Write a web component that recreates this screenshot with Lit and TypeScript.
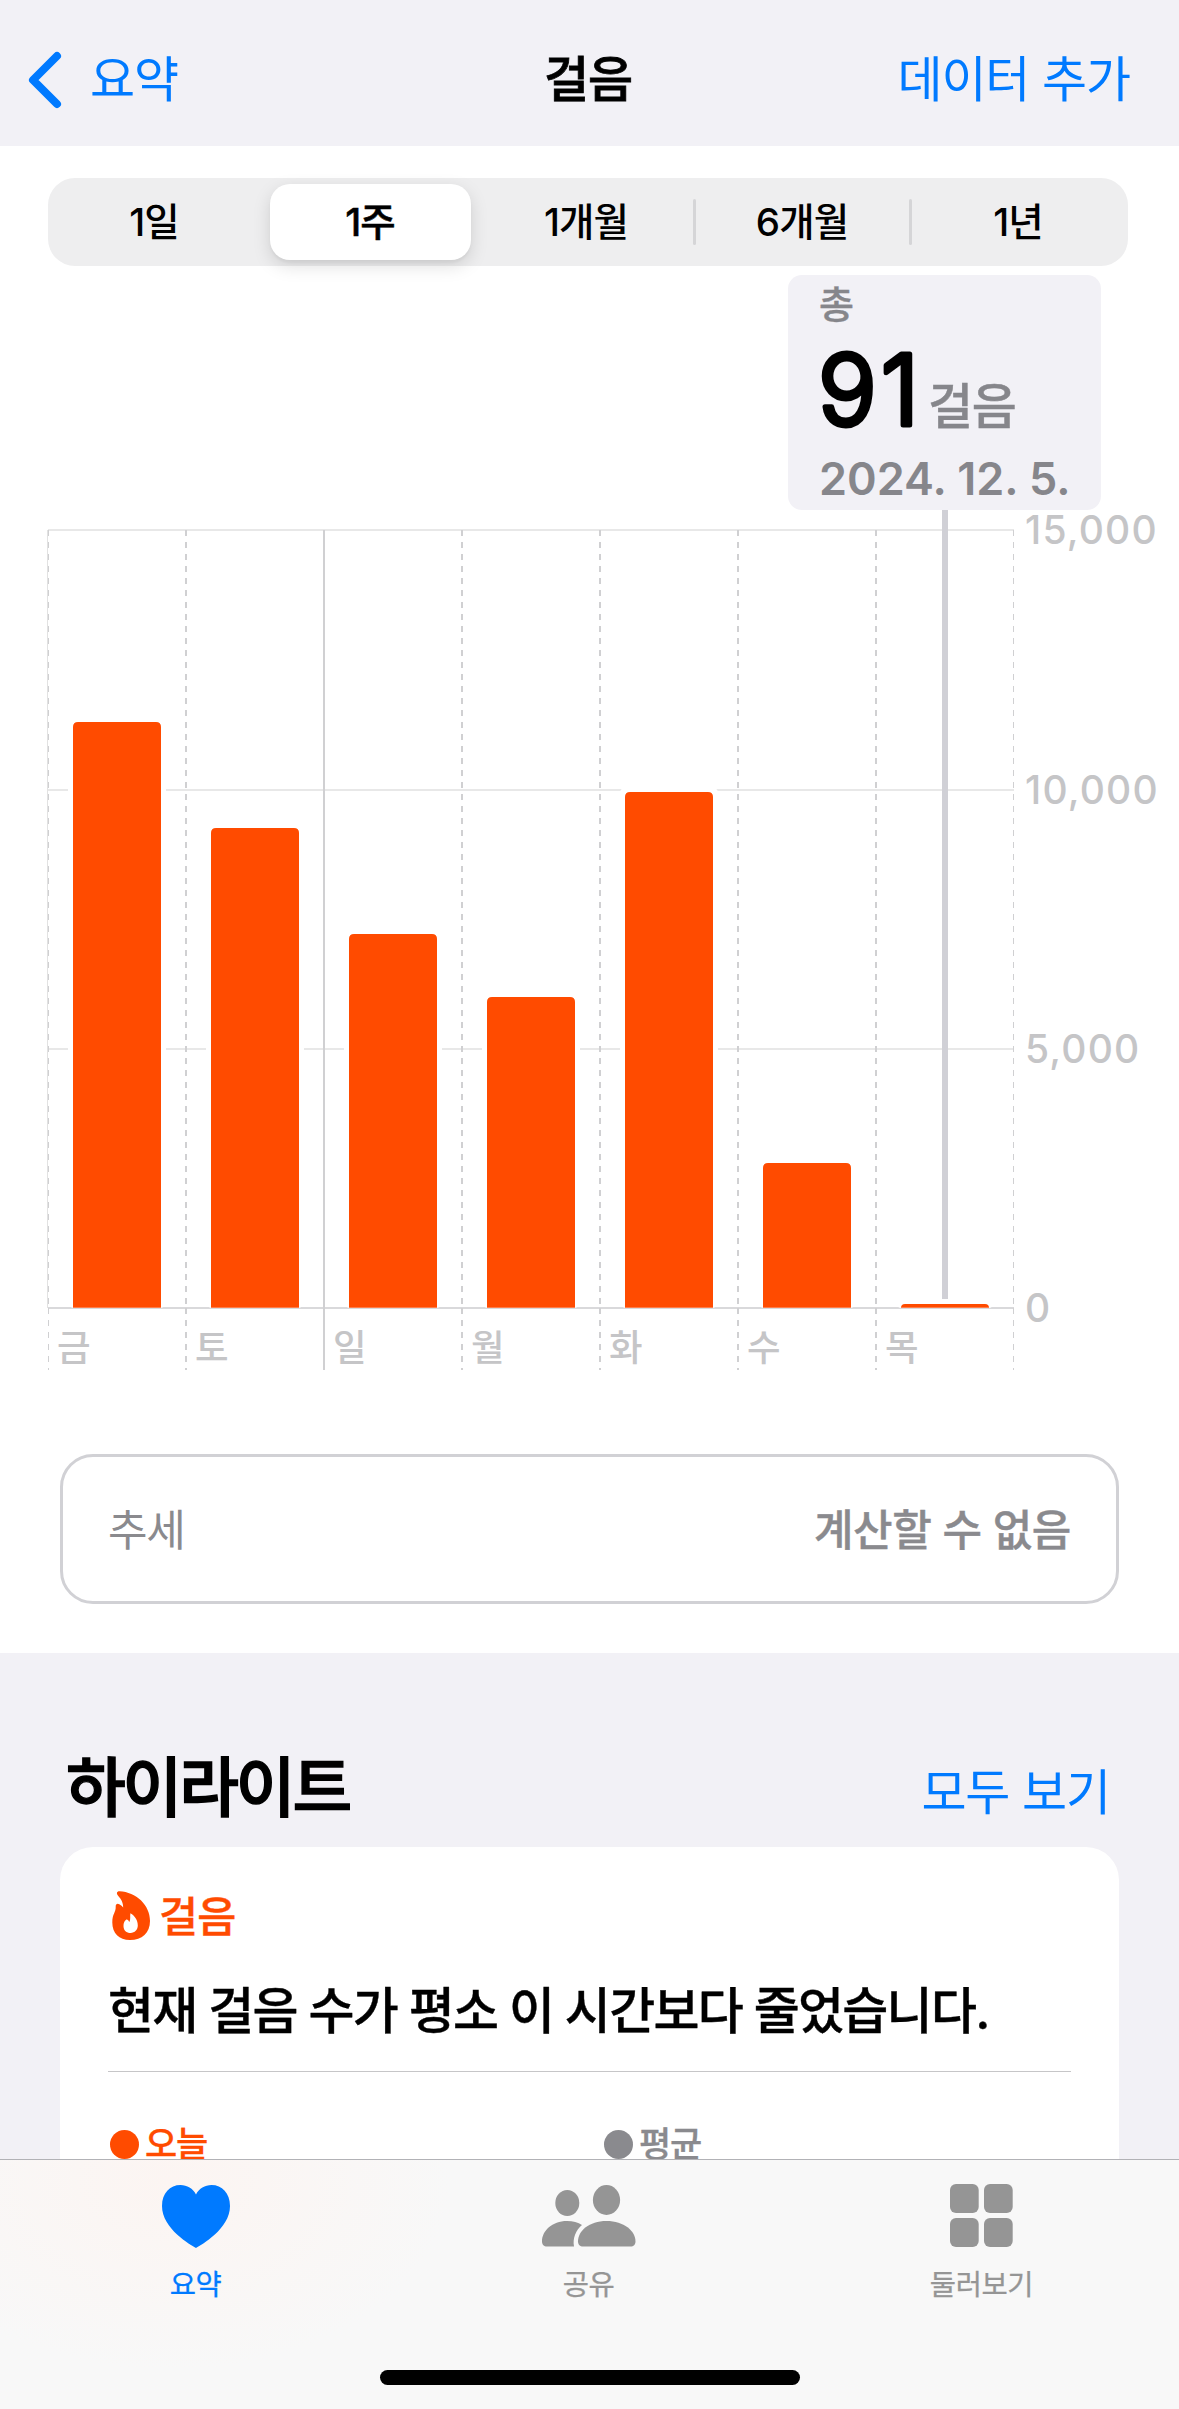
import { LitElement, html, svg, css } from "lit";
import { customElement } from "lit/decorators.js";

interface Day {
  label: string;
  top: number;
}

const BASE = 1308;
const CHART_TOP = 512;
const STEP = 138;
const LEFT = 48;

const DAYS: Day[] = [
  { label: "금", top: 722 },
  { label: "토", top: 828 },
  { label: "일", top: 934 },
  { label: "월", top: 997 },
  { label: "화", top: 792 },
  { label: "수", top: 1163 },
  { label: "목", top: 1304 },
];

const SCALE = [
  { text: "15,000", y: 530 },
  { text: "10,000", y: 790 },
  { text: "5,000", y: 1049 },
  { text: "0", y: 1308 },
];

@customElement("steps-chart")
export class StepsChart extends LitElement {
  static styles = css`
    :host {
      display: block;
      height: 870px;
    }
    svg {
      display: block;
      overflow: visible;
    }
    .axis {
      font: 450 39px Inter, "Liberation Sans", sans-serif;
      letter-spacing: 1.2px;
      fill: #c5c5c7;
    }
    .day {
      font: 500 36.5px "Noto Sans CJK KR", sans-serif;
      fill: #c5c5c7;
    }
  `;

  private bar(day: Day, i: number) {
    const x = LEFT + i * STEP + 25;
    const h = BASE - day.top;
    const r = Math.min(5, h);
    return svg`
      <rect x=${x - 5} y=${day.top - 5} width="98" height=${h + 5} rx="6" fill="#fff"></rect>
      <path fill="#ff4b00"
        d="M${x} ${BASE}V${day.top + r}q0 ${-r} ${r} ${-r}h${88 - 2 * r}q${r} 0 ${r} ${r}V${BASE}z"></path>
      <rect x=${x} y=${BASE - 1} width="88" height="1" fill="#ff7c48"></rect>`;
  }

  render() {
    const cols = [0, 1, 2, 3, 4, 5, 6, 7];
    return html`
      <svg width="1179" height="870" viewBox="0 ${CHART_TOP} 1179 870">
        ${SCALE.map(
          (s) => svg`<rect x="48" y=${s.y - 1} width="966" height="2"
            fill=${s.y === BASE ? "#d9d9db" : "#e8e8e8"}></rect>`
        )}
        <rect x="47" y="530" width="1" height="778" fill="#e2e2e2"></rect>
        ${DAYS.map((d, i) => this.bar(d, i))}
        ${cols.map((c) => {
          const edge = c === 0 ? 0.5 : c === 7 ? -0.5 : 0;
          const x = LEFT + c * STEP + edge;
          return c === 2
            ? svg`<path d="M${x} 530V1370" stroke="#d0d0d2" stroke-width="2"></path>`
            : svg`<path d="M${x} 530V${BASE}M${x} ${BASE}V1370" stroke="#d0d0d2"
                stroke-width=${edge ? 1 : 2} stroke-dasharray="6 6"></path>`;
        })}
        <rect x="942" y="508" width="6" height="791" fill="#d0d0d6"></rect>
        ${SCALE.map((s) => svg`<text class="axis" x="1025" y=${s.y + 14}>${s.text}</text>`)}
        ${DAYS.map((d, i) => svg`<text class="day" x=${LEFT + i * STEP + 9} y="1361">${d.label}</text>`)}
      </svg>
    `;
  }
}

@customElement("app-root")
export class AppRoot extends LitElement {
  static styles = css`
    :host {
      display: block;
      width: 1179px;
      height: 2409px;
      overflow: hidden;
      color: #000;
      font-family: Inter, "Noto Sans CJK KR", sans-serif;
      white-space: nowrap;
    }
    .screen {
      display: flex;
      flex-direction: column;
      width: 1179px;
      height: 2409px;
      background: #f2f1f6;
    }
    svg {
      display: block;
    }
    .nav {
      flex: none;
      box-sizing: border-box;
      height: 146px;
      padding: 13px 49px 0 28px;
      display: grid;
      grid-template-columns: 1fr auto 1fr;
      align-items: center;
      font-size: 49px;
      line-height: 60px;
      letter-spacing: -1.1px;
    }
    .back {
      display: flex;
      align-items: center;
      gap: 28px;
      color: #007aff;
    }
    .nav-title {
      font-weight: 500;
      -webkit-text-stroke: 0.8px currentColor;
      padding-left: 18px;
    }
    .action {
      justify-self: end;
      color: #007aff;
    }
    .panel {
      flex: none;
      height: 1507px;
      background: #fff;
      position: relative;
    }
    .segments {
      box-sizing: border-box;
      display: flex;
      width: 1080px;
      height: 88px;
      background: #eeeeef;
      border-radius: 27px;
      font-size: 38.5px;
      letter-spacing: -0.9px;
      font-weight: 450;
    }
    .top {
      padding: 32px 48px 0;
      height: 366px;
      box-sizing: border-box;
    }
    .segment {
      flex: 1;
      display: flex;
      align-items: center;
      justify-content: center;
      position: relative;
    }
    .segment.selected::before {
      content: "";
      position: absolute;
      inset: 6px 9px 6px 6px;
      border-radius: 20px;
      background: #fff;
      box-shadow: 0 6px 18px rgba(0, 0, 0, 0.13), 0 3px 3px rgba(0, 0, 0, 0.04);
    }
    .segment.selected {
      font-weight: 500;
      -webkit-text-stroke: 0.5px currentColor;
    }
    .segment span {
      position: relative;
      padding: 0 4px 6px 0;
    }
    .segment.ruled::after {
      content: "";
      position: absolute;
      right: 0;
      top: 21px;
      width: 3px;
      height: 46px;
      border-radius: 2px;
      background: #d5d5d7;
    }
    .callout {
      position: absolute;
      left: 788px;
      top: 129px;
      width: 313px;
      height: 235px;
      box-sizing: border-box;
      padding: 7px 0 0 31px;
      border-radius: 14px;
      background: #f2f1f6;
      color: #86868b;
      font-weight: 600;
    }
    .callout-label {
      font-size: 38px;
      line-height: 44px;
      font-weight: 500;
      -webkit-text-stroke: 0.4px currentColor;
    }
    .callout-value {
      display: flex;
      align-items: flex-start;
      height: 126px;
    }
    .callout-number {
      font: 300 97.5px Inter, sans-serif;
      fill: #000;
      stroke: #000;
      stroke-width: 5px;
      stroke-linejoin: round;
      letter-spacing: 4px;
    }
    .callout-unit {
      font-size: 49px;
      line-height: 60px;
      padding-top: 51px;
      letter-spacing: -1.3px;
      font-weight: 500;
      -webkit-text-stroke: 0.4px currentColor;
    }
    .callout-date {
      font-size: 45px;
      line-height: 54px;
      letter-spacing: 0;
    }
    .trend {
      box-sizing: border-box;
      width: 1059px;
      height: 150px;
      margin: 72px 0 0 60px;
      padding: 0 45px 4px 45px;
      display: flex;
      align-items: center;
      justify-content: space-between;
      border: 3px solid #d1d1d5;
      border-radius: 33px;
      color: #8a8a8e;
      font-size: 43px;
      letter-spacing: -1.2px;
    }
    .strong {
      font-weight: 500;
      letter-spacing: -0.4px;
      -webkit-text-stroke: 0.4px currentColor;
    }
    .highlights {
      flex: 1;
      min-height: 0;
      overflow: hidden;
      display: flex;
      flex-direction: column;
      padding: 0 60px;
    }
    .heading {
      flex: none;
      height: 194px;
      box-sizing: border-box;
      padding: 95px 9px 0 6px;
      display: flex;
      justify-content: space-between;
    }
    .heading-title {
      font-size: 65px;
      line-height: 80px;
      font-weight: 500;
      -webkit-text-stroke: 1.4px currentColor;
      letter-spacing: -3.2px;
    }
    .heading-link {
      font-size: 49px;
      line-height: 90px;
      letter-spacing: -1.1px;
      color: #007aff;
    }
    .card {
      flex: none;
      height: 400px;
      box-sizing: border-box;
      background: #fff;
      border-radius: 33px;
      padding: 43px 48px 0;
    }
    .card-kind {
      display: flex;
      align-items: center;
      gap: 9px;
      padding-left: 4px;
      height: 50px;
      color: #ff4b00;
      font-size: 42.5px;
      font-weight: 500;
      -webkit-text-stroke: 0.4px currentColor;
      letter-spacing: -0.9px;
    }
    .card-kind span {
      padding-bottom: 4px;
    }
    .card-text {
      height: 132px;
      line-height: 60px;
      padding-top: 41px;
      box-sizing: border-box;
      font-size: 50px;
      font-weight: 500;
      -webkit-text-stroke: 0.4px currentColor;
      letter-spacing: -1.7px;
      border-bottom: 1px solid #c6c6c8;
    }
    .legend {
      display: grid;
      grid-template-columns: 494px 1fr;
      padding: 50px 0 0 2px;
      font-size: 35px;
      font-weight: 500;
      -webkit-text-stroke: 0.3px currentColor;
      letter-spacing: -1.2px;
      line-height: 44px;
    }
    .key {
      display: flex;
      align-items: center;
      gap: 6px;
    }
    .dot {
      width: 29px;
      height: 29px;
      border-radius: 50%;
      background: currentColor;
    }
    .today {
      color: #ff4b00;
    }
    .average {
      color: #8a8a8e;
    }
    .tabs {
      flex: none;
      height: 250px;
      box-sizing: border-box;
      border-top: 1px solid #b2b2b6;
      background: radial-gradient(ellipse 280px 190px at 170px 20px, #fcf5f2, #f8f8f8);
      color: #959595;
      display: flex;
      flex-direction: column;
      align-items: center;
    }
    .tab-row {
      display: grid;
      grid-template-columns: repeat(3, 393px);
      width: 1179px;
      height: 210px;
    }
    .tab {
      display: flex;
      flex-direction: column;
      align-items: center;
      padding-top: 24px;
      padding-right: 2px;
      font-size: 28.5px;
      line-height: 40px;
      font-weight: 400;
      -webkit-text-stroke: 0.3px currentColor;
      letter-spacing: -0.4px;
      gap: 17px;
    }
    .tab.active {
      color: #007aff;
    }
    .home {
      width: 420px;
      height: 15px;
      border-radius: 8px;
      background: #000;
    }
  `;

  render() {
    return html`
      <div class="screen">
        <div class="nav">
          <div class="back">
            <svg width="34" height="58" viewBox="0 0 34 58" fill="none" stroke="currentColor"
              stroke-width="8" stroke-linecap="round" stroke-linejoin="round">
              <path d="M29 5L5 29l24 24"></path>
            </svg>
            <span>요약</span>
          </div>
          <div class="nav-title">걸음</div>
          <div class="action">데이터 추가</div>
        </div>
        <div class="panel">
          <div class="top">
            <div class="segments">
              <div class="segment"><span>1일</span></div>
              <div class="segment selected"><span>1주</span></div>
              <div class="segment ruled"><span>1개월</span></div>
              <div class="segment ruled"><span>6개월</span></div>
              <div class="segment"><span>1년</span></div>
            </div>
          </div>
          <steps-chart></steps-chart>
          <div class="callout">
            <div class="callout-label">총</div>
            <div class="callout-value">
              <svg width="109" height="126" viewBox="0 0 109 126">
                <text class="callout-number" x="-1" y="99">91</text>
              </svg>
              <span class="callout-unit">걸음</span>
            </div>
            <div class="callout-date">2024. 12. 5.</div>
          </div>
          <div class="trend">
            <span>추세</span>
            <span class="strong">계산할 수 없음</span>
          </div>
        </div>
        <div class="highlights">
          <div class="heading">
            <div class="heading-title">하이라이트</div>
            <div class="heading-link">모두 보기</div>
          </div>
          <div class="card">
            <div class="card-kind">
              <svg width="38" height="49" viewBox="0 0 38 49" fill="currentColor">
                <path fill-rule="evenodd"
                  d="M7.5.3C24 1 38 14 38 30c0 12-8 19-20 19C7 49 .3 42 .3 31.500c0-9 3.700-10 3.400-16C3.600 13 5.500 12 7.300 13.300c1.700 1 3 2.200 3.900 3.200C11 11 9 8 6.300 5 4 2.500 4.800.200 7.500.300zM18.400 22.300c-.6 3 .6 6-1.200 9-.6-2-2-3.300-3.400-2.400-1.500 1-2.300 3.400-2.300 6 0 4.400 3 7 7.100 7s7.200-3 7.200-7.400c0-5-2.800-9.600-7.400-12.200z"></path>
              </svg>
              <span>걸음</span>
            </div>
            <div class="card-text">현재 걸음 수가 평소 이 시간보다 줄었습니다.</div>
            <div class="legend">
              <div class="key today"><i class="dot"></i><span>오늘</span></div>
              <div class="key average"><i class="dot"></i><span>평균</span></div>
            </div>
          </div>
        </div>
        <div class="tabs">
          <div class="tab-row">
            <div class="tab active">
              <svg width="68" height="64" viewBox="0 0 68 64" fill="currentColor">
                <path d="M34 64C29 61 0 45 0 22 0 9 8 1 18.500 1 25 1 31 4.500 34 10.500 37 4.500 43 1 49.500 1 60 1 68 9 68 22c0 23-29 39-34 42z"></path>
              </svg>
              <span>요약</span>
            </div>
            <div class="tab">
              <svg width="94" height="64" viewBox="0 0 94 64" fill="currentColor">
                <ellipse cx="25.300" cy="19" rx="12" ry="13"></ellipse>
                <ellipse cx="64.500" cy="16" rx="13.600" ry="15"></ellipse>
                <path d="M5 62.500c-3 0-5-2-5-5C0 47 10 37 25 37c6 0 11 1.500 15 4-6 5-9.500 13-8 21.500z"></path>
                <path d="M41 62.500c-3 0-5-2-5-5C36 47 47 37 64.500 37S93.500 47 93.500 57.500c0 3-2 5-5 5z"></path>
              </svg>
              <span>공유</span>
            </div>
            <div class="tab">
              <svg width="63" height="64" viewBox="0 0 63 64" fill="currentColor">
                <rect x="0" y="0" width="28.700" height="29" rx="6"></rect>
                <rect x="34" y="0" width="28.700" height="29" rx="6"></rect>
                <rect x="0" y="34" width="28.700" height="29" rx="6"></rect>
                <rect x="34" y="34" width="28.700" height="29" rx="6"></rect>
              </svg>
              <span>둘러보기</span>
            </div>
          </div>
          <div class="home"></div>
        </div>
      </div>
    `;
  }
}
